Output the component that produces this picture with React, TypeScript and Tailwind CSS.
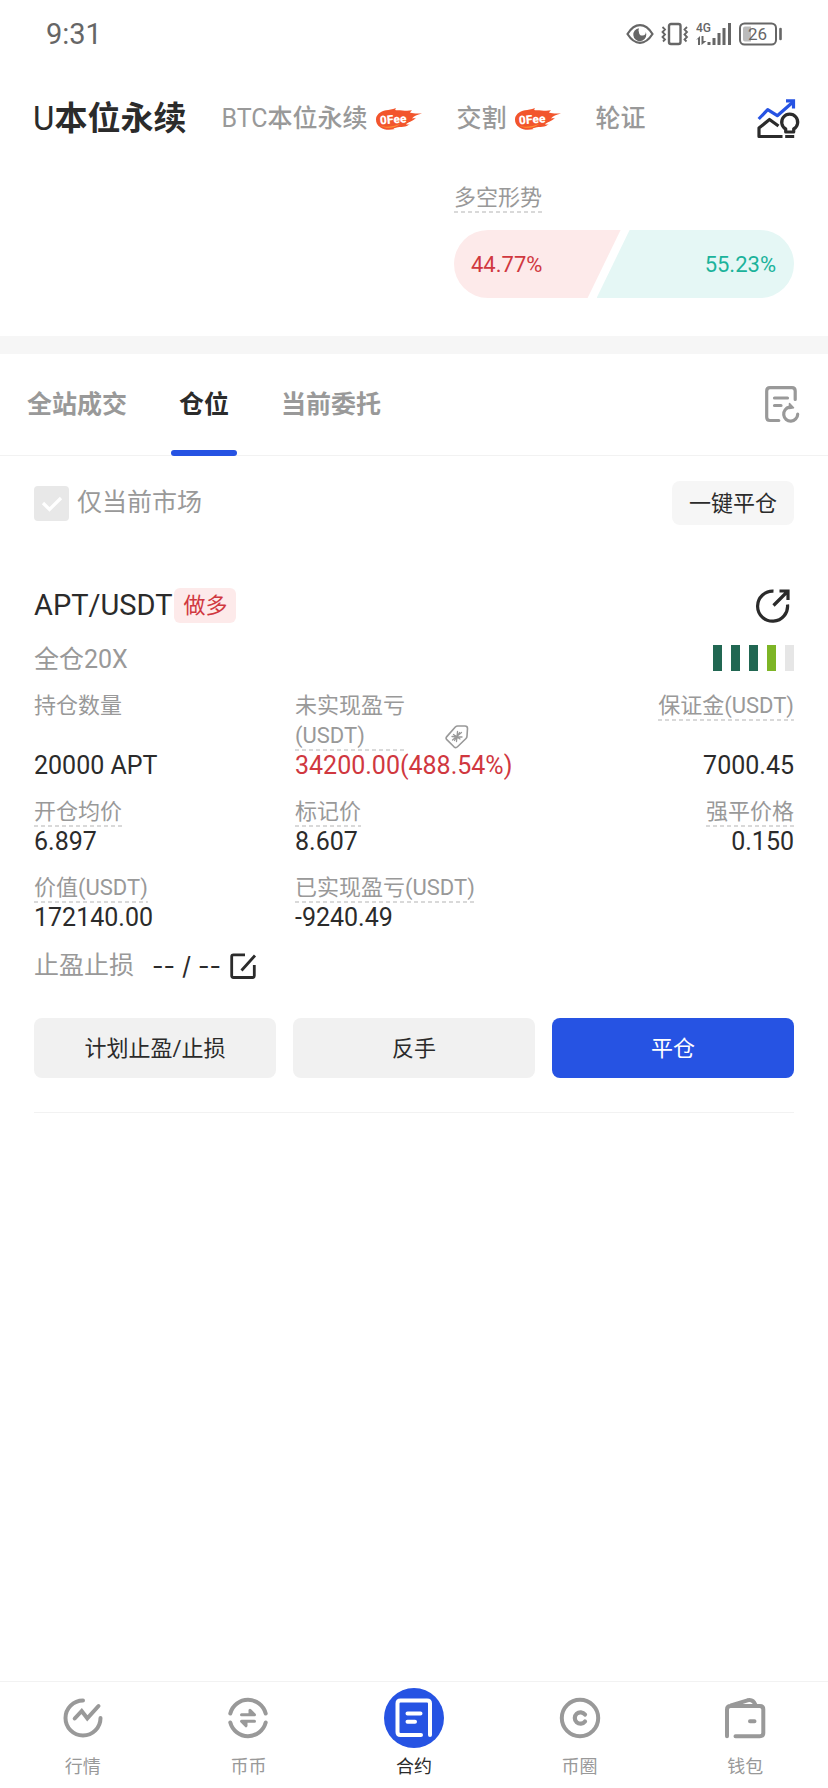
import { useState } from "react";
import type { ReactNode } from "react";
import clsx from "clsx";

function StatusBar() {
  return (
    <div className="flex h-[68px] items-center justify-between pr-[45px] pl-[46px] text-[#666]">
      <span className="text-[29px] leading-9">9:31</span>
      <div className="flex items-center gap-[7px]">
        <svg width="28" height="22" viewBox="0 0 28 22" fill="none" aria-hidden="true">
          <path d="M1.5 11Q7 2.2 14 2.2T26.5 11Q21 19.8 14 19.8T1.5 11Z" stroke="currentColor" strokeWidth="2.2" />
          <path d="M13 5.2a6.500 6.500 0 1 0 7.300 6.300 6 6 0 0 0-.6-2.600A3.300 3.300 0 0 1 13 9.500Q12 7 13 5.200Z" fill="currentColor" />
        </svg>
        <svg width="28" height="24" viewBox="0 0 28 24" fill="none" stroke="currentColor" aria-hidden="true">
          <rect x="8" y="2" width="11.5" height="20" rx="2" strokeWidth="2.4" />
          <path d="M1.5 5L4 7.5 1.500 10 4 12.5 1.500 15 4 17.5 2 19.5M26 5l-2.500 2.500L26 10l-2.500 2.500L26 15l-2.500 2.500 2 2" strokeWidth="1.8" />
        </svg>
        <svg width="36" height="24" viewBox="0 0 36 24" aria-hidden="true">
          <text x="0" y="10" fontSize="12" fontWeight="500" fill="currentColor" fontFamily="Roboto">
            4G
          </text>
          <path d="M0 18l4-4v9H2v-6zM5.500 14h2v5h3l-5 4z" fill="currentColor" />
          <path d="M13 20v3M18 16v7M23 11v12M28 6v17M33.500 1v22" stroke="currentColor" strokeWidth="3" />
        </svg>
        <svg width="44" height="24" viewBox="0 0 44 24" aria-hidden="true">
          <rect x="1" y="1.5" width="36" height="21" rx="4.5" fill="none" stroke="currentColor" strokeWidth="2" />
          <path d="M6 4.500h6v15H6a2 2 0 0 1-2-2v-11a2 2 0 0 1 2-2Z" fill="#bbb" />
          <path d="M41.500 7v10" stroke="currentColor" strokeWidth="2.6" strokeLinecap="round" />
          <text x="18.5" y="18" fontSize="17" textAnchor="middle" fill="currentColor" fontFamily="Roboto">
            26
          </text>
        </svg>
      </div>
    </div>
  );
}

function ZeroFee() {
  return (
    <svg width="46" height="22" viewBox="0 0 46 22" aria-hidden="true">
      <path
        d="M10 2.300C13 1.500 16 2 20 0 19 1.500 19 2 20 2.300 26 2 30 3.500 36 2.300 35 3.500 34 4 34 4.600 38 6 41 5.500 46 5.600 41 7 38 8 36 10.500 38 10.500 39 10 40 9.800 36 14 32 14 30 16.500 32 16.700 33 16.500 34 16 30 19.500 25 18.500 20 19.700 17 20.300 17 21 19 21 13 22.500 8 21.800 4.500 19.500 1 17.300 0 14.500 0 11.500 0 7 4 3.500 10 2.300Z"
        fill="#f2552c"
      />
      <path d="M4 17.500c6 2.500 14 1 20-1.500-4 4-14 5.500-20 1.500Z" fill="#ff9436" />
      <text x="4" y="15.5" fontSize="12" fontWeight="900" fill="#fff" fontFamily="Roboto" transform="rotate(-5 17 12)">
        0Fee
      </text>
    </svg>
  );
}

const markets = [
  { unit: "U", label: "本位永续", fee: false },
  { unit: "BTC", label: "本位永续", fee: true },
  { unit: "", label: "交割", fee: true },
  { unit: "", label: "轮证", fee: false },
];

function MarketHeader() {
  const [active, setActive] = useState(0);

  return (
    <header className="flex h-[102px] items-center justify-between pr-[28px] pl-[33px]">
      <nav className="flex items-center gap-[35px]">
        {markets.map(({ unit, label, fee }, i) => (
          <button
            key={unit + label}
            onClick={() => setActive(i)}
            className={clsx(
              "flex items-center gap-2 whitespace-nowrap",
              active === i ? "text-[33px] text-[#2b2b2b]" : "text-[25px] text-[#999]",
            )}
          >
            <span>
              {unit}
              <span className={active === i ? "font-bold" : "font-medium"}>{label}</span>
            </span>
            {fee && <ZeroFee />}
          </button>
        ))}
      </nav>
      <button aria-label="策略">
        <svg width="43" height="40" viewBox="0 0 43 40" fill="none" strokeWidth="3.2" strokeLinejoin="round" aria-hidden="true">
          <path d="M1.700 20l9-9.300 9.600 6L36 3" stroke="#2653e3" />
          <path d="M29 1.800h7.500V9.500" stroke="#2653e3" strokeLinejoin="miter" />
          <path d="M25.500 37.500H2V29l10.500-8.500 9 6.500" stroke="#2b2b2b" />
          <path d="M28.700 33v-3a8 8 0 1 1 8 0v3ZM28.200 37.500h9" stroke="#2b2b2b" />
        </svg>
      </button>
    </header>
  );
}

function Dashed({ children }: { children: ReactNode }) {
  return (
    <span className="inline-block bg-[repeating-linear-gradient(90deg,#d9d9d9_0_4px,transparent_4px_7px)] bg-[length:100%_2px] bg-bottom bg-no-repeat">
      {children}
    </span>
  );
}

function LongShort() {
  return (
    <section className="flex justify-end px-[34px] pt-[13px] pb-[38px]">
      <div className="w-[340px]">
        <h2 className="text-[22px] leading-[30px] text-[#999]">
          <Dashed>多空形势</Dashed>
        </h2>
        <div className="mt-[17px] flex h-[68px] overflow-hidden rounded-full text-[22px]">
          <div className="flex w-[49%] items-center bg-[#fdeaea] pl-[17px] text-[#d0383f] [clip-path:polygon(0_0,100%_0,calc(100%-33px)_100%,0_100%)]">
            44.77%
          </div>
          <div className="-ml-6 flex flex-1 items-center justify-end bg-[#e5f7f5] pr-[18px] text-[#1bb39b] [clip-path:polygon(33px_0,100%_0,100%_100%,0_100%)]">
            55.23%
          </div>
        </div>
      </div>
    </section>
  );
}

const tabs = ["全站成交", "仓位", "当前委托"];

function OrderTabs() {
  const [active, setActive] = useState("仓位");

  return (
    <div className="flex h-[102px] items-stretch justify-between border-b border-[#f2f2f2] pr-[28px] pl-[27px]">
      <div className="flex gap-[52px]" role="tablist">
        {tabs.map((tab) => (
          <button
            key={tab}
            role="tab"
            aria-selected={active === tab}
            onClick={() => setActive(tab)}
            className={clsx("relative text-[25px] font-bold", active === tab ? "text-[#2b2b2b]" : "text-[#999]")}
          >
            {tab}
            {active === tab && <span className="absolute -inset-x-2 -bottom-px h-1.5 rounded-full bg-[#2653e3]" />}
          </button>
        ))}
      </div>
      <button aria-label="历史记录" className="text-[#999]">
        <svg width="35" height="37" viewBox="0 0 35 37" fill="none" stroke="currentColor" strokeWidth="3.2" strokeLinecap="round" aria-hidden="true">
          <path d="M30.200 13.500V5q0-3.300-3.300-3.300H5Q1.700 1.700 1.700 5v26.200q0 3.300 3.300 3.300h8.800" />
          <path d="M9.500 12h13M9.500 19.500h6.500M24.500 21.200a7 7 0 1 0 8.200 7" />
          <path d="M24.500 17.500l4 4.200-4 .7Z" fill="currentColor" strokeWidth="1.5" strokeLinejoin="round" />
        </svg>
      </button>
    </div>
  );
}

function Toolbar() {
  return (
    <div className="flex items-center justify-between px-[34px] pt-[25px]">
      <label className="flex items-center gap-2 text-[25px] leading-[30px] text-[#999]">
        <span className="grid">
          <input
            type="checkbox"
            defaultChecked
            className="peer col-start-1 row-start-1 size-[35px] appearance-none rounded-[4px] bg-[#e8e8e8]"
          />
          <svg className="pointer-events-none invisible col-start-1 row-start-1 peer-checked:visible" width="35" height="35" viewBox="0 0 35 35" fill="none" aria-hidden="true">
            <path d="M9 17l6.500 6.500L27 12" stroke="#fff" strokeWidth="3.2" />
          </svg>
        </span>
        仅当前市场
      </label>
      <button className="h-[44px] rounded-lg bg-[#f6f6f6] px-[17px] text-[22px] text-[#2b2b2b]">一键平仓</button>
    </div>
  );
}

interface FieldProps {
  label: ReactNode;
  value: string;
  plain?: boolean;
  right?: boolean;
  red?: boolean;
  extra?: ReactNode;
}

function Field({ label, value, plain, right, red, extra }: FieldProps) {
  return (
    <div className={clsx("flex flex-col justify-between", right && "text-right")}>
      <dt className="flex-1 text-[22px] leading-[30px] text-[#999]">
        <span className={clsx("flex items-end gap-10", right && "justify-end")}>
          {plain ? label : <Dashed>{label}</Dashed>}
          {extra}
        </span>
      </dt>
      <dd className={clsx("text-[25px] leading-[30px] whitespace-nowrap", red ? "text-[#d0383f]" : "text-[#2b2b2b]")}>{value}</dd>
    </div>
  );
}

function TagIcon() {
  return (
    <svg className="mb-[2px]" width="24" height="24" viewBox="0 0 24 24" fill="none" stroke="#999" strokeWidth="1.6" strokeLinecap="round" strokeLinejoin="round" aria-hidden="true">
      <path d="M9 21.800 1.800 14.600q-1.400-1.400 0-3L10.300 2q1-1 2.500-1H20q2.500 0 2.500 2.500L22 11q0 1.500-1 2.500l-8.500 8.300q-1.700 1.600-3.500 0Z" />
      <path d="M7 11.500l10 .5M12.500 6.500l-1 10M8.500 9.500l6.500 4.500M14.500 7.500l-5 8M7.500 15l9-7.500" strokeWidth="1.3" />
    </svg>
  );
}

const levels = ["bg-[#216752]", "bg-[#216752]", "bg-[#216752]", "bg-[#7db526]", "bg-[#e6e6e6]"];

function PositionCard() {
  return (
    <article className="mx-[34px] mt-[63px] border-b border-[#f2f2f2] pb-[34px]">
      <div className="flex h-[35px] items-center justify-between">
        <div className="flex items-center">
          <h3 className="text-[29px] leading-[35px] text-[#2b2b2b]">APT/USDT</h3>
          <span className="ml-[2px] rounded-md bg-[#fdeaea] px-[9px] text-[22px] leading-[35px] text-[#d0383f]">做多</span>
        </div>
        <button aria-label="分享" className="mr-1">
          <svg width="34" height="34" viewBox="0 0 34 34" fill="none" stroke="#2b2b2b" strokeWidth="3.2" aria-hidden="true">
            <path d="M17.500 2.200a15 15 0 1 0 14 13.300M17.500 16.500 31 3M23.500 2H32v9" />
          </svg>
        </button>
      </div>

      <div className="mt-[22px] flex justify-between">
        <span className="text-[25px] leading-[30px] text-[#999]">全仓20X</span>
        <div className="flex h-[26px] gap-[9px]">
          {levels.map((color, i) => (
            <span key={i} className={clsx("w-[9px]", color)} />
          ))}
        </div>
      </div>

      <dl className="mt-4 grid grid-cols-[261fr_250fr_249fr] gap-y-4">
        <Field label="持仓数量" value="20000 APT" plain />
        <Field
          label={
            <>
              未实现盈亏
              <br />
              (USDT)
            </>
          }
          value="34200.00(488.54%)"
          red
          extra={<TagIcon />}
        />
        <Field label="保证金(USDT)" value="7000.45" right />
        <Field label="开仓均价" value="6.897" />
        <Field label="标记价" value="8.607" />
        <Field label="强平价格" value="0.150" right />
        <Field label="价值(USDT)" value="172140.00" />
        <Field label="已实现盈亏(USDT)" value="-9240.49" />
      </dl>

      <div className="mt-[18px] flex items-center text-[25px] leading-[30px]">
        <span className="text-[#999]">止盈止损</span>
        <span className="ml-[18px] font-[Inter,sans-serif] text-[#2b2b2b]">-- / --</span>
        <button aria-label="编辑止盈止损" className="ml-[9px]">
          <svg width="27" height="27" viewBox="0 0 27 27" fill="none" stroke="#2b2b2b" strokeWidth="2.8" strokeLinejoin="round" aria-hidden="true">
            <path d="M15 1.800H3.500Q1.700 1.800 1.700 3.500v19.300q0 1.700 1.800 1.700h19q1.800 0 1.800-1.700V12M11.500 17.500 25 2.500" />
          </svg>
        </button>
      </div>

      <div className="mt-[37px] grid grid-cols-3 gap-[17px] text-[22px] text-[#2b2b2b]">
        <button className="h-[60px] rounded-lg bg-[#f1f1f1]">计划止盈/止损</button>
        <button className="h-[60px] rounded-lg bg-[#f1f1f1]">反手</button>
        <button className="h-[60px] rounded-lg bg-[#2653e3] text-white">平仓</button>
      </div>
    </article>
  );
}

const navItems = [
  {
    label: "行情",
    icon: <path d="M20 2.500A17.500 17.500 0 1 0 37.500 20M11.700 20.500l7-7.500 5.600 7.300L35.500 8" />,
  },
  {
    label: "币币",
    icon: (
      <>
        <path d="M2.300 15.500a18.300 18.300 0 0 1 35.400 0M2.300 24.500a18.300 18.300 0 0 0 35.400 0" />
        <path d="M13.500 16.800h13l-4.500-4.500v4.500M26.500 23.300h-13l4.500 4.500v-4.500" strokeWidth="3" strokeLinejoin="round" />
      </>
    ),
  },
  { label: "合约", icon: null },
  {
    label: "币圈",
    icon: (
      <>
        <circle cx="20" cy="20" r="18.2" />
        <path d="M25 16.500a5.700 5.700 0 1 0 0 7" strokeWidth="4.2" />
      </>
    ),
  },
  {
    label: "钱包",
    icon: <path d="M2 38.200V11.500Q2 8 5.500 8H34.800q3.500 0 3.500 3.500V35q0 3.200-3.500 3.200H10.500M6 7.500 22.500 2.300Q28 .8 30.500 7M25 23.300h4.500" />,
  },
];

function BottomNav() {
  return (
    <nav className="sticky bottom-0 mt-auto grid grid-cols-5 border-t border-[#f2f2f2] bg-white pt-1.5 pb-[9px]">
      {navItems.map(({ label, icon }) => (
        <a key={label} href="#" className={clsx("flex flex-col items-center text-[18px] leading-6", icon ? "text-[#999]" : "text-[#2b2b2b]")}>
          <span className="flex size-[60px] items-center justify-center">
            {icon ? (
              <svg width="40" height="40" viewBox="0 0 40 40" fill="none" stroke="currentColor" strokeWidth="4" strokeLinecap="round" className="overflow-visible" aria-hidden="true">
                {icon}
              </svg>
            ) : (
              <svg width="60" height="60" viewBox="0 0 60 60" fill="none" stroke="#fff" strokeWidth="4" strokeLinecap="round" aria-hidden="true">
                <circle cx="30" cy="30" r="30" fill="#2653e3" stroke="none" />
                <path d="M46 47V15.500q0-3-3-3H16.500q-3 0-3 3V44q0 3 3 3H37M23.500 25.500h13M23.500 33.700H31" />
              </svg>
            )}
          </span>
          <span className="mt-[7px]">{label}</span>
        </a>
      ))}
    </nav>
  );
}

export default function App() {
  return (
    <div className="flex min-h-screen flex-col bg-white font-[Roboto,'Noto_Sans_CJK_SC',sans-serif]">
      <StatusBar />
      <MarketHeader />
      <LongShort />
      <div className="h-[18px] bg-[#f6f6f6]" />
      <OrderTabs />
      <main className="pb-8">
        <Toolbar />
        <PositionCard />
      </main>
      <BottomNav />
    </div>
  );
}
